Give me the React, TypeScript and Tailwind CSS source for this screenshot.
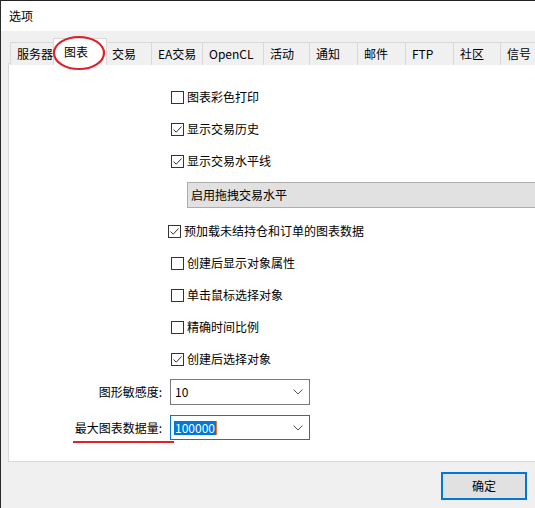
import React from "react";

const font = { fontFamily: '"Noto Sans CJK SC", "Noto Sans", sans-serif' };

function Check({ checked }: { checked?: boolean }) {
  return (
    <span className="w-[13px] h-[13px] border border-[#333333] bg-white flex items-center justify-center shrink-0">
      {checked && (
        <svg width="11" height="11" viewBox="0 0 11 11">
          <path d="M1.5 5.5 L4.2 8.2 L9.5 2.5" fill="none" stroke="#333333" strokeWidth="1" />
        </svg>
      )}
    </span>
  );
}

function Row({ label, checked, shift }: { label: string; checked?: boolean; shift?: boolean }) {
  return (
    <div className={`h-[32px] flex items-center gap-[3px] ${shift ? "-ml-[3px]" : ""}`}>
      <Check checked={checked} />
      <span className="text-[12px] text-black leading-none">{label}</span>
    </div>
  );
}

function Chevron() {
  return (
    <svg width="10" height="6" viewBox="0 0 10 6">
      <path d="M0.5 0.5 L5 5 L9.5 0.5" fill="none" stroke="#555555" strokeWidth="1" />
    </svg>
  );
}

const tabs: { label: string; w: number }[] = [
  { label: "服务器", w: 45 },
  { label: "图表", w: 50 },
  { label: "交易", w: 46 },
  { label: "EA交易", w: 51 },
  { label: "OpenCL", w: 61 },
  { label: "活动", w: 46 },
  { label: "通知", w: 48 },
  { label: "邮件", w: 48 },
  { label: "FTP", w: 48 },
  { label: "社区", w: 47 },
  { label: "信号", w: 48 },
];

export default function App() {
  return (
    <div className="w-[535px] h-[508px] overflow-hidden bg-[#f0f0f0] border-l border-[#2b2b2b] relative" style={font}>
      <div className="h-[1px] bg-[#222222]" />
      <div className="h-[30px] bg-white flex items-center pl-[8px] text-[12px] text-black">选项</div>
      <div className="pl-[7px] pt-[11px]">
        <div className="flex h-[22px] relative z-10 pl-[2px]">
          {tabs.map((t, i) =>
            i === 1 ? (
              <div
                key={t.label}
                className="shrink-0 w-[54px] -mx-[2px] h-[27px] -mt-[4px] bg-white border-l border-t border-r border-[#d9d9d9] flex items-center pl-[10px] text-[12px] text-black relative z-20"
              >
                {t.label}
              </div>
            ) : (
              <div
                key={t.label}
                style={{ width: t.w }}
                className="shrink-0 h-[23px] bg-[#f0f0f0] border-l border-t border-[#d9d9d9] flex items-center pl-[6px] text-[12px] text-black whitespace-nowrap overflow-hidden"
              >
                {t.label}
              </div>
            )
          )}
        </div>
        <div className="w-[560px] h-[399px] bg-white border border-[#d9d9d9] -mt-[1px] relative">
          <div className="pl-[162px] pt-[17px] flex flex-col">
            <Row label="图表彩色打印" />
            <Row label="显示交易历史" checked />
            <Row label="显示交易水平线" checked />
            <div className="ml-[16px] mt-[5px] h-[26px] bg-[#e1e1e1] border border-[#adadad] flex items-center pl-[3px] text-[12px] text-black">
              启用拖拽交易水平
            </div>
            <div className="mt-[7px] flex flex-col">
              <Row label="预加载未结持仓和订单的图表数据" checked shift />
              <Row label="创建后显示对象属性" />
              <Row label="单击鼠标选择对象" />
              <Row label="精确时间比例" />
              <Row label="创建后选择对象" checked />
            </div>
          </div>
          <div className="flex flex-col mt-[4px] gap-[10px]">
            <div className="flex items-center">
              <span className="w-[155px] text-right text-[12px] text-black pr-[2px]">图形敏感度:</span>
              <div className="ml-[6px] w-[140px] h-[26px] bg-white border border-[#7a7a7a] flex items-center justify-between pl-[4px] pr-[6px] text-[12px] text-black">
                <span>10</span>
                <Chevron />
              </div>
            </div>
            <div className="flex items-center">
              <div className="w-[155px] flex justify-end pr-[2px]">
                <span className="text-[12px] text-black relative">
                  最大图表数据量:
                  <span className="absolute left-[-2px] right-[-12px] -bottom-[6px] h-[2px] bg-[#e0202a]" />
                </span>
              </div>
              <div className="ml-[6px] w-[140px] h-[25px] bg-white border border-[#0078d7] flex items-center justify-between pl-[3px] pr-[6px] text-[12px]">
                <span className="flex items-center">
                  <span className="bg-[#0078d7] text-white leading-[14px] px-[1px]">100000</span>
                  <span className="w-[1px] h-[14px] bg-[#e08030]" />
                </span>
                <Chevron />
              </div>
            </div>
          </div>
        </div>
      </div>
      <div className="flex justify-end pr-[8px] pt-[10px]">
        <div className="w-[86px] h-[28px] bg-[#e1e1e1] border-2 border-[#0078d7] flex items-center justify-center text-[12px] text-black">
          确定
        </div>
      </div>
      <svg className="absolute left-[51px] top-[35px] pointer-events-none z-30" width="54" height="36" viewBox="0 0 54 36">
        <ellipse cx="27" cy="18" rx="25" ry="16" fill="none" stroke="#e0202a" strokeWidth="2.2" />
      </svg>
    </div>
  );
}
